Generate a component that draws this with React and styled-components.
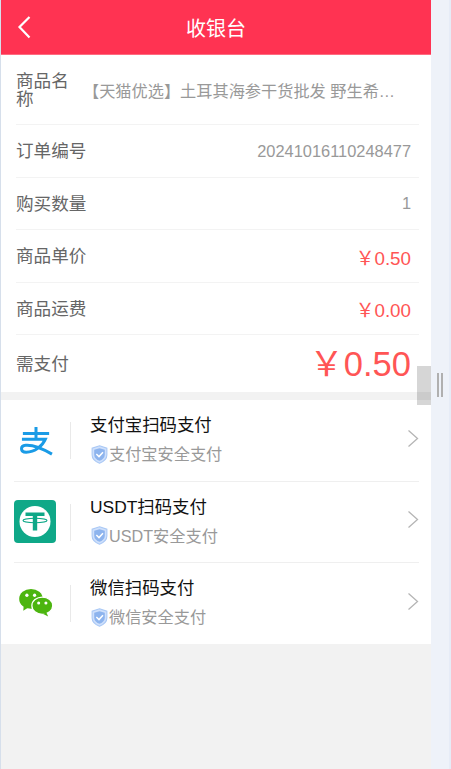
import React from "react";
import styled, { createGlobalStyle } from "styled-components";

const Global = createGlobalStyle`
  html, body { margin: 0; padding: 0; background: #eef2f9; }
  body { font-family: "Liberation Sans", "Noto Sans CJK SC", sans-serif; overflow: hidden; }
  * { box-sizing: border-box; }
`;
const Page = styled.div`
  position: relative; display: flex; width: 451px; height: 769px; overflow: hidden;
  border-left: 1px solid #d6dfeb; border-right: 2px solid #e6ecf7;
`;
const Main = styled.main`
  width: 430px; height: 769px; background: #f2f2f2; flex: none; display: flex; flex-direction: column;
`;
const Header = styled.header`
  height: 55px; background: #ff3352; border-bottom: 1px solid #ff6b80; color: #fff; flex: none;
  display: flex; align-items: center; justify-content: center; position: relative;
  font-size: 20px;
`;
const Back = styled.svg`
  position: absolute; left: 15px; top: 14px; width: 18px; height: 26px;
`;
const Card = styled.section`
  background: #fff; padding: 0 12px 0 15px; flex: none;
`;
const Row = styled.div`
  display: flex; align-items: center; justify-content: space-between;
  height: ${p => p.$h}px; padding-right: 8px;
  border-bottom: ${p => (p.$last ? "none" : "1px solid #f3f3f3")};
`;
const Label = styled.div`
  font-size: 17.6px; color: #666; line-height: 17.6px; width: ${p => p.$w || "auto"}; flex: none;
  position: relative; top: 1px;
`;
const Value = styled.div`
  font-size: ${p => p.$size || 16.4}px; color: ${p => p.$color || "#999"};
  white-space: nowrap; margin-top: ${p => p.$lift ? -p.$lift : 0}px;
`;
const Title = styled(Value)`
  flex: 1; margin-left: -3px; color: #999; font-size: 16.2px;
`;
const Pay = styled.section`
  background: #fff; margin-top: 8px; padding: 0 12px 0 13px; flex: none;
`;
const PayRow = styled.div`
  display: flex; align-items: center; height: ${p => p.$h}px;
  border-bottom: ${p => (p.$last ? "none" : "1px solid #efefef")};
`;
const LogoCell = styled.div`
  width: 57px; height: 37px; flex: none; display: flex; align-items: center;
  border-right: 1px solid #e9e9e9; margin-right: 19px;
`;
const Info = styled.div`
  flex: 1; display: flex; flex-direction: column; gap: 7px; margin-bottom: 4px;
`;
const Name = styled.div`
  font-size: 17.4px; line-height: 24px; color: #111;
`;
const Sub = styled.div`
  display: flex; align-items: center; font-size: 16.2px; line-height: 20px; color: #999;
`;
const Handle = styled.div`
  position: absolute; left: 416px; top: 366px; width: 14px; height: 39px; background: rgba(0,0,0,.16);
`;
const Grip = styled.div`
  position: absolute; left: 436px; top: 373px; width: 6px; height: 24px;
  border-left: 2px solid #b0b0b0; border-right: 2px solid #b0b0b0;
`;

const Shield = () => (
  <svg width="17" height="19" viewBox="0 0 16 18" style={{ marginRight: 1, marginLeft: 1 }}>
    <path d="M8 .8 15 3v6.500c0 3.800-3.200 6.300-7 7.700-3.800-1.400-7-3.900-7-7.700V3z" fill="#cfe0fb" stroke="#a9c8f5" strokeWidth="1"/>
    <path d="M8 3 13 4.600v4.800c0 2.700-2.300 4.500-5 5.600-2.700-1.100-5-2.900-5-5.600V4.600z" fill="#8db4ee"/>
    <path d="M5 8.600 7.500 11 11.300 6.800" fill="none" stroke="#fff" strokeWidth="1.400"/>
  </svg>
);
const Chevron = () => (
  <svg width="12" height="19" viewBox="0 0 12 19" style={{ flex: "none", marginBottom: 5 }}>
    <path d="M1.500 1.500 10.500 9.500 1.500 17.500" fill="none" stroke="#b5b5b5" strokeWidth="1.300"/>
  </svg>
);
const Alipay = () => (
  <svg width="36" height="30" viewBox="0 0 38 32" style={{ marginLeft: 4 }}>
    <g fill="none" stroke="#1a9be6" strokeWidth="3.200">
      <path d="M5 8H33M19 1V14"/>
      <path d="M4 14H29C26 21 18 28 8.500 28 2 28 2 21 8 20.500 15 20 26 24 36 30"/>
    </g>
  </svg>
);
const Tether = () => (
  <svg width="42" height="43" viewBox="0 0 42 43" style={{ marginBottom: 2 }}>
    <rect width="42" height="43" rx="4" fill="#0fa888"/>
    <circle cx="21" cy="21.500" r="15.500" fill="#fff"/>
    <path d="M11.500 12.500H30.500V16H23.200V30.500H18.800V16H11.500Z" fill="#0fa888"/>
    <ellipse cx="21" cy="20.500" rx="12" ry="2.200" fill="none" stroke="#0fa888" strokeWidth="1.100"/>
  </svg>
);
const Wechat = () => (
  <svg width="35" height="29" viewBox="0 0 38 32" style={{ marginLeft: 4, marginBottom: 3 }}>
    <ellipse cx="14" cy="12" rx="13" ry="11" fill="#4cb50f"/>
    <path d="M6 19 5.500 25 12 21Z" fill="#4cb50f"/>
    <ellipse cx="26.500" cy="19.500" rx="11.500" ry="9.500" stroke="#fff" strokeWidth="1.400" fill="#4cb50f"/>
    <path d="M31 27 33 31.500 27 28.500Z" fill="#4cb50f"/>
    <circle cx="9.500" cy="8" r="1.800" fill="#fff"/>
    <circle cx="18" cy="8" r="1.800" fill="#fff"/>
    <circle cx="22.500" cy="16.500" r="1.700" fill="#fff"/>
    <circle cx="30.500" cy="16.500" r="1.700" fill="#fff"/>
  </svg>
);

const orderRows = [
  { l: "订单编号", v: "20241016110248477", h: 53 },
  { l: "购买数量", v: "1", h: 52 },
  { l: "商品单价", v: "￥0.50", h: 53, c: "#f55", s: 18.8 },
  { l: "商品运费", v: "￥0.00", h: 52, c: "#f55", s: 18.8 },
];
const methods = [
  { name: "支付宝扫码支付", sub: "支付宝安全支付", Logo: Alipay, h: 82 },
  { name: "USDT扫码支付", sub: "USDT安全支付", Logo: Tether, h: 81 },
  { name: "微信扫码支付", sub: "微信安全支付", Logo: Wechat, h: 81, last: true },
];

export default function App() {
  return (
    <>
      <Global />
      <Page>
        <Main>
          <Header>
            <Back viewBox="0 0 18 26">
              <path d="M13.500 3 3.500 13 13.500 23.500" fill="none" stroke="#fff" strokeWidth="2.200"/>
            </Back>
            收银台
          </Header>
          <Card>
            <Row $h={70}>
              <Label $w="70px">商品名称</Label>
              <Title>【天猫优选】土耳其海参干货批发 野生希…</Title>
            </Row>
            {orderRows.map(({ l, v, h, c, s }) => (
              <Row key={l} $h={h}>
                <Label>{l}</Label>
                <Value $color={c} $size={s}>{v}</Value>
              </Row>
            ))}
            <Row $h={57} $last>
              <Label>需支付</Label>
              <Value $color="#f55" $size={34.5} $lift={5}>￥0.50</Value>
            </Row>
          </Card>
          <Pay>
            {methods.map(({ name, sub, Logo, h, last }) => (
              <PayRow key={name} $h={h} $last={last}>
                <LogoCell><Logo /></LogoCell>
                <Info>
                  <Name>{name}</Name>
                  <Sub><Shield />{sub}</Sub>
                </Info>
                <Chevron />
              </PayRow>
            ))}
          </Pay>
        </Main>
        <Handle />
        <Grip />
      </Page>
    </>
  );
}
